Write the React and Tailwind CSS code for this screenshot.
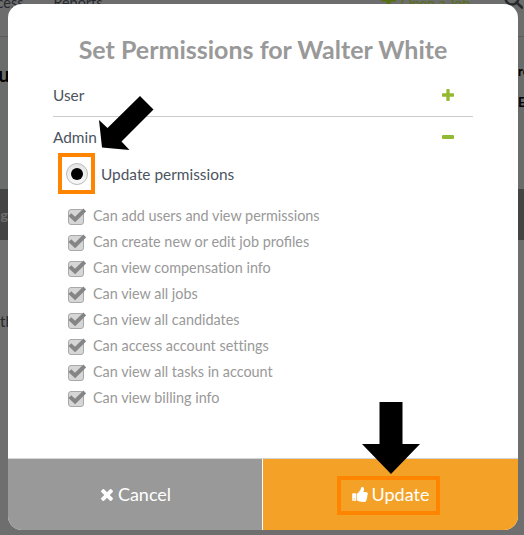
import { useState } from 'react';

const PERMISSIONS = [
    'Can add users and view permissions',
    'Can create new or edit job profiles',
    'Can view compensation info',
    'Can view all jobs',
    'Can view all candidates',
    'Can access account settings',
    'Can view all tasks in account',
    'Can view billing info',
];

const PlusIcon = ({ className }) => (
    <svg viewBox="192 192 1408 1408" fill="currentColor" className={className}>
        <path d="M1600 800v192q0 40-28 68t-68 28h-416v416q0 40-28 68t-68 28h-192q-40 0-68-28t-28-68v-416h-416q-40 0-68-28t-28-68v-192q0-40 28-68t68-28h416v-416q0-40 28-68t68-28h192q40 0 68 28t28 68v416h416q40 0 68 28t28 68z" />
    </svg>
);

const TimesIcon = ({ className }) => (
    <svg viewBox="302 366 1188 1188" fill="currentColor" className={className}>
        <path d="M1490 1322q0 40-28 68l-136 136q-28 28-68 28t-68-28l-294-294-294 294q-28 28-68 28t-68-28l-136-136q-28-28-28-68t28-68l294-294-294-294q-28-28-28-68t28-68l136-136q28-28 68-28t68 28l294 294 294-294q28-28 68-28t68 28l136 136q28 28 28 68t-28 68l-294 294 294 294q28 28 28 68z" />
    </svg>
);

const ThumbsUpIcon = ({ className }) => (
    <svg viewBox="64 128 1600 1536" fill="currentColor" className={className}>
        <path d="M320 1344q0-26-19-45t-45-19q-27 0-45.5 19t-18.5 45q0 27 18.5 45.5t45.5 18.5q26 0 45-18.5t19-45.5zm160-512v640q0 26-19 45t-45 19h-288q-26 0-45-19t-19-45v-640q0-26 19-45t45-19h288q26 0 45 19t19 45zm1184 0q0 86-55 149 15 44 15 76 3 76-43 137 17 56 0 117-15 57-54 94 9 112-49 181-64 76-197 78h-129q-66 0-144-15.5t-121.5-29-120.5-39.5q-123-43-158-44-26-1-45-19.5t-19-44.5v-641q0-25 18-43.5t43-20.5q24-2 76-59t101-121q68-87 101-120 18-18 31-48t17.5-48.5 13.5-60.5q7-39 12.5-61t19.5-52 34-50q19-19 45-19 46 0 82.5 10.5t60 26 40 40.5 24 45 12 50 5 45 .5 39q0 38-9.5 76t-19 60-27.5 56q-3 6-10 18t-11 22-8 24h277q78 0 135 57t57 135z" />
    </svg>
);

const CheckedBox = () => (
    <svg viewBox="0 0 18 17" className="w-[18px] h-[17px] shrink-0">
        <rect x="0.5" y="1.5" width="15" height="15" rx="2.5" fill="#d6d6d6" stroke="#a9a9a9" />
        <path d="M1.800 6.600 7.100 11.500 16.800 2" fill="none" stroke="#858585" strokeWidth="4" />
    </svg>
);

// The page that stays visible, dimmed, around the dialog
const Backdrop = () => (
    <div className="h-full flex flex-col bg-[#6e6e6e]">
        <div className="h-[37px] shrink-0 border-b border-[#5b5b5b] bg-[#6d6d6d] flex justify-between">
            <div className="flex gap-[30px] -ml-[25px] -mt-[7px] text-[14.4px] leading-5 text-[#25282d]">
                <span>Process</span>
                <span>Reports</span>
            </div>
            <div className="flex -mt-[7px] text-[14px] leading-5 text-[#54700f]">
                <PlusIcon className="w-[15px] h-[15px] mt-[-1px] mr-[5px]" />
                <span>Open a Job</span>
                <svg viewBox="0 0 20 20" className="w-[20px] h-[20px] ml-[33px] mr-px mt-[-3px]" fill="none" stroke="#25282d" strokeWidth="2.6">
                    <circle cx="9" cy="8" r="6.5" />
                    <path d="M13.5 12.5 19 17.5" strokeLinecap="round" />
                </svg>
            </div>
        </div>
        <div className="h-[152px] shrink-0 bg-[#696c6b] flex justify-between text-black font-bold">
            <span className="-ml-[24px] mt-[25px] text-[20px] leading-6">You</span>
            <div className="w-[6px] mt-[24px] text-[13px]">
                <div className="leading-[20px]">re</div>
                <div className="mt-[11px] leading-[20px]">Ed</div>
            </div>
        </div>
        <div className="h-[51px] shrink-0 bg-[#444]">
            <div className="w-2 flex justify-end pt-[16px] text-[14px] leading-5 text-[#6e6e6e] font-bold">ng</div>
        </div>
        <div className="w-[9px] mt-[71px] text-[15px] leading-5 text-[#25282d]">the</div>
    </div>
);

export default function App() {
    const [selected, setSelected] = useState('admin');

    return (
        <div className="relative w-[524px] h-[535px] overflow-hidden font-['Lato',sans-serif]">
            <Backdrop />

            <div className="absolute left-[8px] top-[4px] w-[510px] h-[526px] rounded-[14px] overflow-hidden bg-white flex flex-col">
                <div className="flex-1 px-[45px]">
                    <h1 className="mt-[29px] text-center text-[25px] leading-8 font-bold text-[#999] whitespace-nowrap">
                        Set Permissions for Walter White
                    </h1>

                    <div className="w-[420px] h-[52px] pt-[19px] pr-[19px] flex justify-between border-b border-[#ccc] text-[15.4px] leading-[22px] text-[#4c545e]">
                        <span>User</span>
                        <PlusIcon className="w-[12px] h-[12px] mt-[5px] text-[#93b832]" />
                    </div>
                    <div className="w-[420px] h-[36px] pt-[9px] pr-[19px] flex justify-between text-[15.4px] leading-[22px] text-[#4c545e]">
                        <span>Admin</span>
                        <span className="w-[12px] h-[4px] mt-[9px] rounded-[1px] bg-[#93b832]" />
                    </div>

                    <div className="ml-[5px] flex items-center gap-[6px] text-[15.4px] text-[#4c545e]">
                        <button
                            onClick={() => setSelected('admin')}
                            className="w-[37px] h-[41px] border-4 border-[#ff8400] flex items-center justify-center"
                        >
                            <span className="w-[22px] h-[22px] rounded-full border border-[#bbb] bg-linear-to-b from-[#e4e4e4] to-[#f8f8f8] flex items-center justify-center">
                                {selected === 'admin' && <span className="w-[12px] h-[12px] rounded-full bg-black" />}
                            </span>
                        </button>
                        <span className="pt-[2px]">Update permissions</span>
                    </div>

                    <ul className="mt-[9px] ml-[15px] text-[14.4px] text-[#999]">
                        {PERMISSIONS.map((label) => (
                            <li
                                key={label}
                                className="h-[26px] flex items-center gap-[7px] whitespace-nowrap [font-variant-ligatures:none] nth-2:[font-variant-ligatures:normal]"
                            >
                                <CheckedBox />
                                {label}
                            </li>
                        ))}
                    </ul>
                </div>

                <div className="h-[72px] shrink-0 flex border-t border-[#d5d5d5] text-[18px] text-white">
                    <button className="w-[254px] pl-[2px] bg-[#999] flex items-center justify-center gap-[5px]">
                        <TimesIcon className="w-[12px] h-[12px] mt-px" />
                        Cancel
                    </button>
                    <button className="flex-1 ml-px bg-[#f4a227] flex items-center pl-[74px]">
                        <span className="w-[103px] h-[39px] mt-[2px] border-4 border-[#ff8400] flex items-center justify-center gap-[4px] pl-[4px] pb-[2px]">
                            <ThumbsUpIcon className="w-[16px] h-[15px]" />
                            Update
                        </span>
                    </button>
                </div>
            </div>

            {/* Callout arrows */}
            <svg viewBox="0 0 56 56" className="absolute left-[99px] top-[95px] w-[56px] h-[56px]">
                <path d="M41 1 54.500 14.500 22.500 46.500 30.500 55 3 52.500 0 25 8.500 33Z" />
            </svg>
            <svg viewBox="0 0 58 72" className="absolute left-[362px] top-[402px] w-[58px] h-[72px]">
                <path d="M17.500 0H40.500V42H58L29 72 0 42H17.500Z" />
            </svg>
        </div>
    );
}
